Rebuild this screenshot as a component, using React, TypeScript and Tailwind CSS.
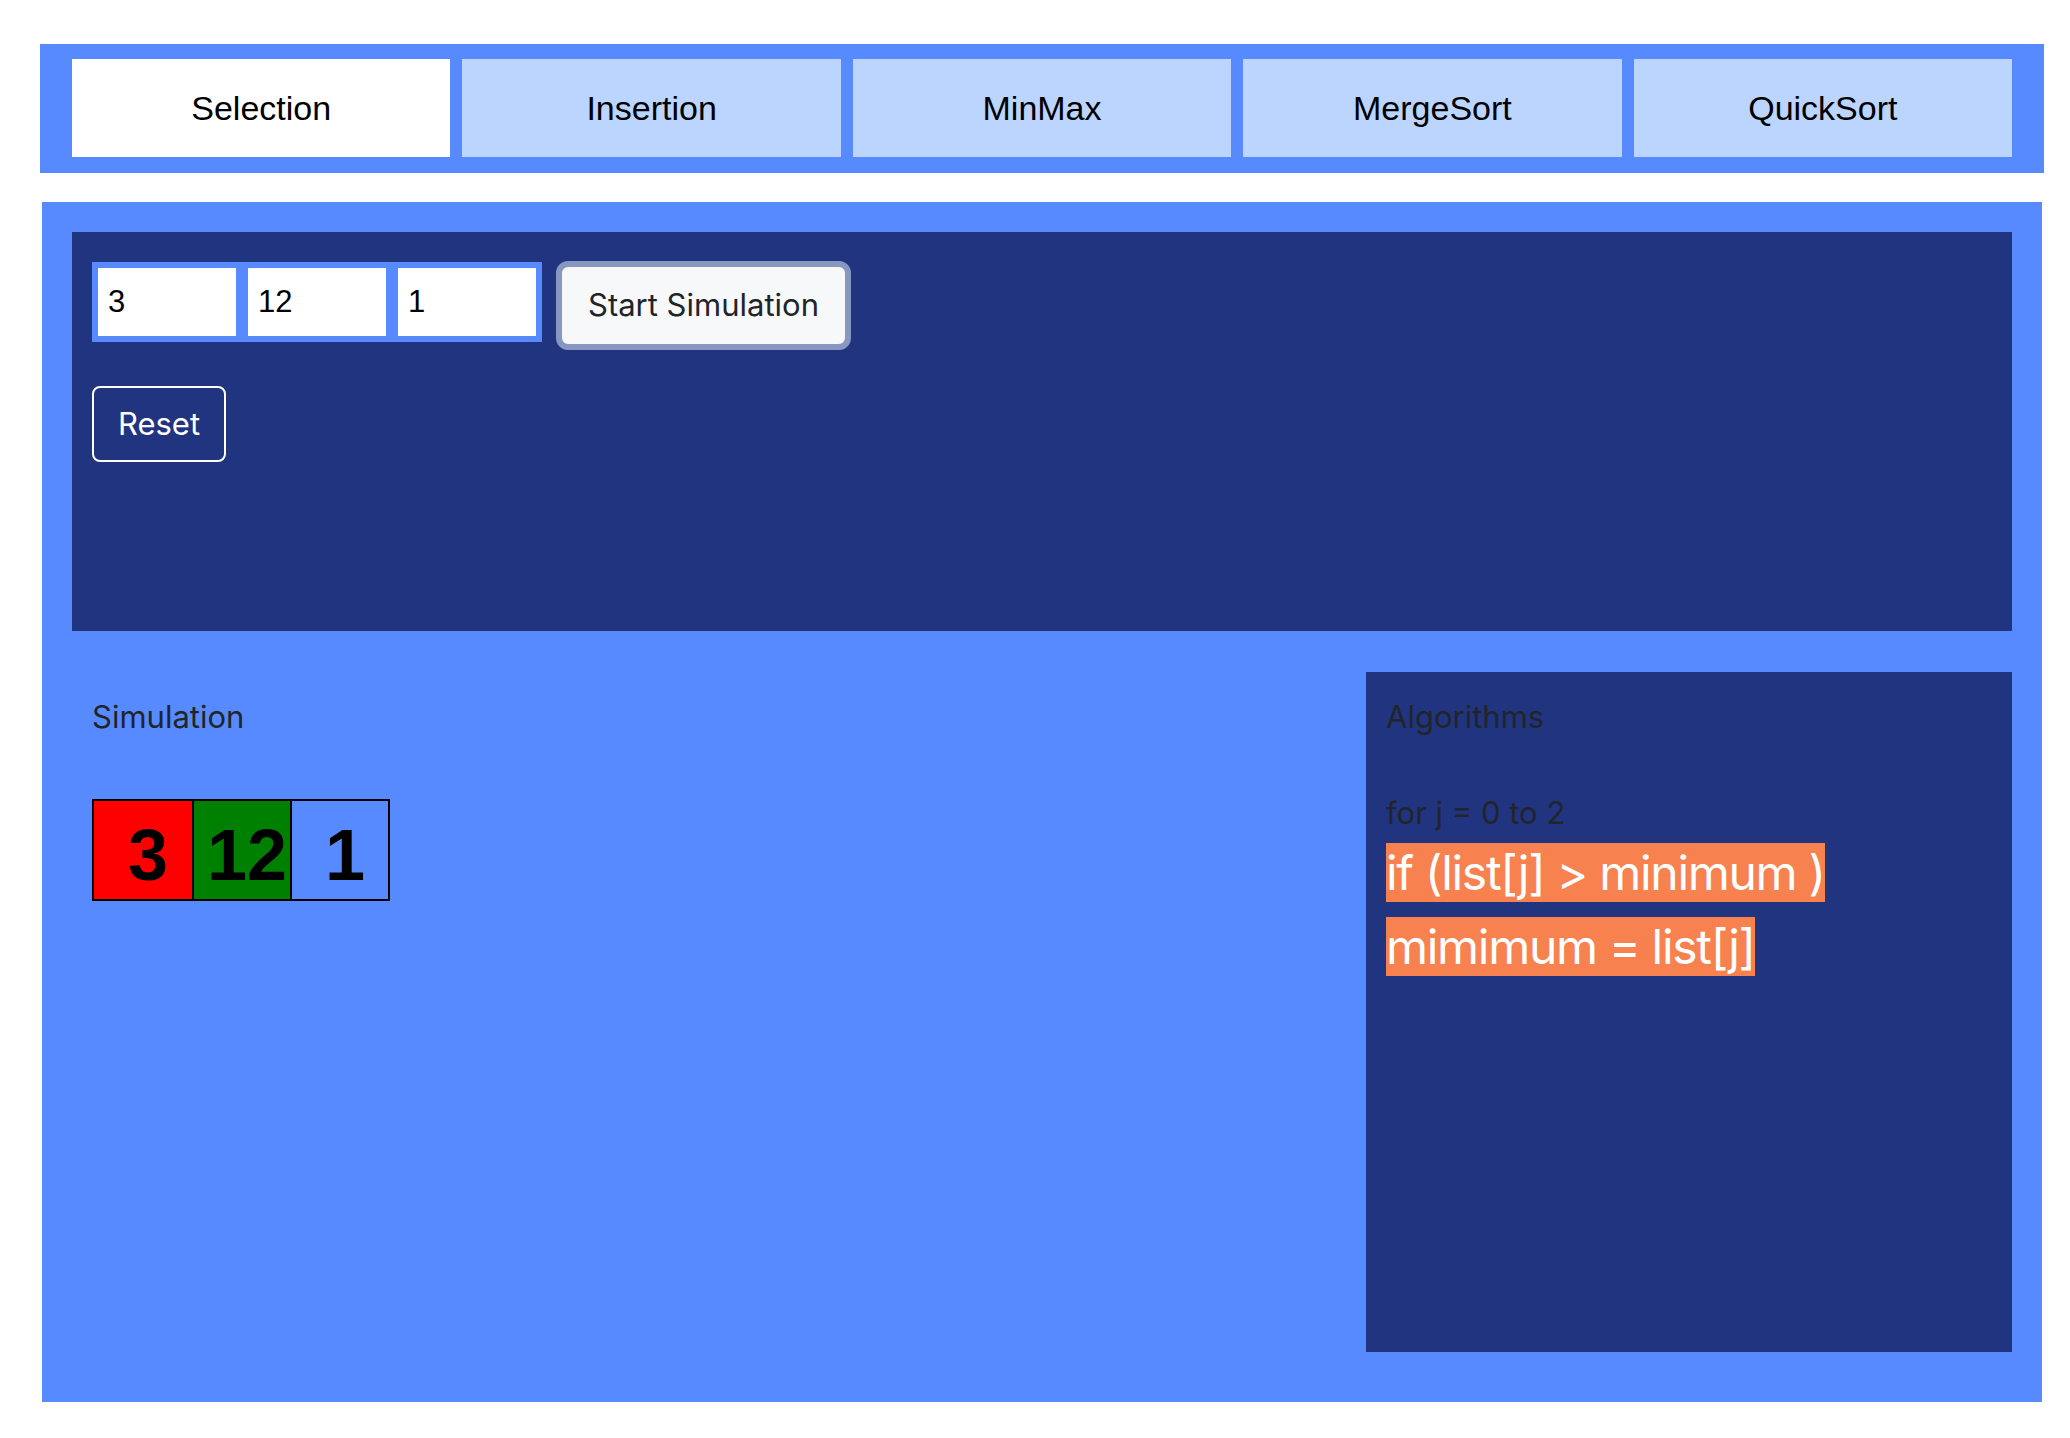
import { useState } from "react";

const TABS = ["Selection", "Insertion", "MinMax", "MergeSort", "QuickSort"] as const;

const CELLS = [
  { value: 3, bg: "bg-[#ff0000]" },
  { value: 12, bg: "bg-[#008000]" },
  { value: 1, bg: "bg-transparent" },
];

const SANS = "font-['Inter',sans-serif]";
const HELV = "font-['Liberation_Sans',Arial,sans-serif]";

export default function App() {
  const [active, setActive] = useState<string>("Selection");
  const [values, setValues] = useState(["3", "12", "1"]);

  return (
    <div className="min-h-screen bg-white pt-[44px]">
      {/* ── Algorithm tabs ─────────────────────────────────────────── */}
      <div className="ml-[40px] flex w-[2004px] gap-[12px] bg-[#588aff] px-[32px] pt-[15px] pb-[16px]">
        {TABS.map((t) => (
          <button
            key={t}
            onClick={() => setActive(t)}
            className={[
              "flex h-[98px] flex-1 items-center justify-center text-[34px] text-black",
              HELV,
              active === t ? "bg-white" : "bg-[#bbd5ff]",
            ].join(" ")}
          >
            {t}
          </button>
        ))}
      </div>

      {/* ── Main panel ─────────────────────────────────────────────── */}
      <div className="mt-[29px] ml-[42px] w-[2000px] bg-[#588aff] px-[30px] pt-[30px] pb-[50px]">
        {/* Controls */}
        <div className="h-[399px] bg-[#213480] px-[20px] pt-[29px]">
          <div className="flex items-start gap-[14px]">
            <div className="mt-[1px] flex gap-[12px] bg-[#588aff] p-[6px]">
              {values.map((v, i) => (
                <input
                  key={i}
                  value={v}
                  onChange={(e) =>
                    setValues((prev) => prev.map((p, j) => (j === i ? e.target.value : p)))
                  }
                  className={`h-[68px] w-[138px] bg-white px-[10px] text-[31px] text-black outline-none ${HELV}`}
                />
              ))}
            </div>
            <button
              className={`h-[89px] w-[295px] rounded-[12px] border-[6px] border-[#8797c0] bg-[#f7f8fa] text-[31px] text-[#212529] ${SANS}`}
            >
              Start Simulation
            </button>
          </div>
          <button
            className={`mt-[36px] h-[76px] w-[134px] rounded-[8px] border-2 border-white text-[31px] text-white ${SANS}`}
          >
            Reset
          </button>
        </div>

        {/* Simulation + algorithm */}
        <div className="mt-[41px] flex">
          <div className="flex-1 p-[20px]">
            <p className={`text-[31px] leading-[50px] text-[#212529] ${SANS}`}>Simulation</p>
            <div className="mt-[57px] flex w-fit border-2 border-black">
              {CELLS.map((c, i) => (
                <div
                  key={i}
                  className={[
                    "flex h-[98px] w-[98px] items-center justify-center pt-[10px] pl-[10px] text-[72px] leading-none font-bold text-black",
                    HELV,
                    c.bg,
                    i > 0 ? "border-l-2 border-black" : "",
                  ].join(" ")}
                >
                  {c.value}
                </div>
              ))}
            </div>
          </div>

          <div className={`h-[680px] w-[646px] bg-[#213480] p-[20px] text-[#212529] ${SANS}`}>
            <p className="text-[31px] leading-[50px]">Algorithms</p>
            <p className="mt-[46px] text-[31px] leading-[50px]">for j = 0 to 2</p>
            <div className="-mt-[2px] text-[48px] leading-[74px] tracking-[-1.3px] text-white">
              <span className="bg-[#f7814f]">if (list[j] &gt; minimum )</span>
            </div>
            <div className="text-[48px] leading-[74px] tracking-[-1.3px] text-white">
              <span className="bg-[#f7814f]">mimimum = list[j]</span>
            </div>
          </div>
        </div>
      </div>
    </div>
  );
}
